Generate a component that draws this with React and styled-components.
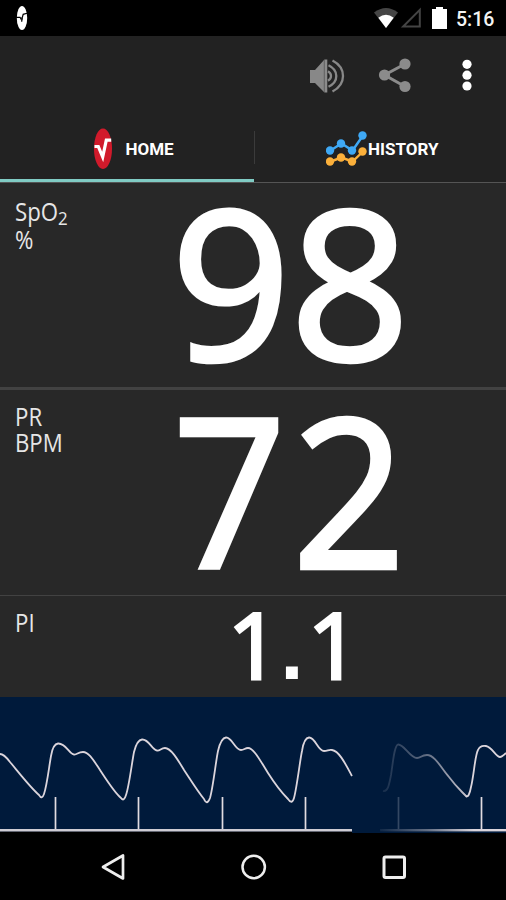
import React from "react";
import styled, { createGlobalStyle } from "styled-components";

const GlobalStyle = createGlobalStyle`
  body {
    margin: 0;
    background: #000;
  }
  * {
    box-sizing: border-box;
  }
  svg {
    display: block;
    flex: none;
  }
`;

const Screen = styled.div`
  width: 506px;
  height: 900px;
  display: flex;
  flex-direction: column;
  overflow: hidden;
  background: #282828;
  color: #fff;
  font-family: Roboto, sans-serif;
`;

const StatusBar = styled.header`
  height: 36px;
  flex: none;
  display: flex;
  align-items: center;
  justify-content: space-between;
  padding: 0 10px 0 16px;
  background: #000;
`;

const StatusIcons = styled.div`
  display: flex;
  align-items: center;
`;

const Clock = styled.span`
  width: 40px;
  margin-left: 9px;
  padding-top: 3px;
  font-size: 19.5px;
  font-weight: 500;
  line-height: 33px;
  white-space: nowrap;
  color: #f4f4f4;
`;

const ActionBar = styled.div`
  height: 80px;
  flex: none;
  display: flex;
  align-items: center;
  justify-content: flex-end;
  padding-right: 33px;
  background: #222;
`;

const Tabs = styled.nav`
  height: 67px;
  flex: none;
  display: flex;
  background: #222;
  border-bottom: 1px solid #555;
`;

const Tab = styled.div`
  width: ${(props) => (props.$active ? "254px" : "251px")};
  height: 66px;
  display: flex;
  align-items: center;
  padding-top: 2px;
  padding-left: ${(props) => (props.$active ? "93px" : "71px")};
  border-bottom: 3px solid ${(props) => (props.$active ? "#80cbc4" : "transparent")};
`;

const TabLabel = styled.span`
  margin-left: ${(props) => props.$gap}px;
  font-size: 17px;
  font-weight: 700;
  line-height: 20px;
`;

const TabDivider = styled.div`
  width: 1px;
  height: 33px;
  margin-top: 15px;
  background: #3b3b3b;
`;

const Panel = styled.section`
  height: ${(props) => props.$height}px;
  flex: none;
  display: grid;
  grid-template-columns: 100px 1fr;
  border-bottom: ${(props) => props.$rule || 0}px solid #424242;
`;

const Label = styled.div`
  padding: ${(props) => props.$top}px 0 0 15px;
  font-family: "Open Sans", "Noto Sans", sans-serif;
  font-size: 25px;
  font-weight: 400;
  line-height: ${(props) => props.$line || 26}px;
  color: #e6e6e6;
  white-space: nowrap;

  span {
    display: block;
    transform: scaleX(0.89);
    transform-origin: 0 0;
  }
  sub {
    font-size: 19px;
    line-height: 0;
    vertical-align: -4px;
  }
`;

const Reading = styled.div`
  padding-left: ${(props) => props.$left}px;
  margin-top: ${(props) => props.$top}px;
  font-family: "Open Sans", "Noto Sans", sans-serif;
  font-size: ${(props) => props.$size}px;
  font-weight: 400;
  line-height: 0.9;
  letter-spacing: ${(props) => props.$spacing || 0}px;
  white-space: nowrap;
  -webkit-text-stroke: ${(props) => props.$stroke || 4.5}px #fff;

  > span {
    display: inline-block;
    transform: scaleX(${(props) => props.$stretch || 1});
    transform-origin: 0 0;
  }
`;

const Point = styled.b`
  display: inline-block;
  width: 27.4px;
  padding-right: 4px;
  font-family: "Liberation Sans", sans-serif;
  font-size: 84px;
  line-height: 0;
  text-align: center;
  -webkit-text-stroke: 0;
`;

const WavePanel = styled.section`
  height: 136px;
  flex: none;
  background: #001a3b;
`;

const NavBar = styled.footer`
  flex: 1;
  display: flex;
  align-items: center;
  justify-content: space-between;
  padding: 0 98px 0 98px;
  background: #000;
`;

const NotificationIcon = () => (
  <svg width="12" height="26" viewBox="0 0 12 26">
    <ellipse cx="6" cy="13" rx="5.2" ry="12" fill="#fff" />
    <path d="M0 12.3H4L5.6 15L7.2 9.3L12 8" fill="none" stroke="#000" strokeWidth="1.2" />
    <path d="M4.6 12.5H7L6.2 17H5.4Z" fill="#222" />
  </svg>
);

const WifiIcon = () => (
  <svg width="26" height="22" viewBox="0 0 26 22">
    <path d="M1 5.5Q13 -3.5 25 5.5L13 21Z" fill="#454545" />
    <path d="M5.3 10.7Q13 5 20.7 10.7L13 21Z" fill="#fff" />
  </svg>
);

const SignalIcon = () => (
  <svg width="22" height="22" viewBox="0 0 22 22" style={{ marginLeft: 1 }}>
    <path d="M3.2 19.5L19.8 2.8V19.5Z" fill="none" stroke="#444" strokeWidth="2" />
  </svg>
);

const BatteryIcon = () => (
  <svg width="15" height="22" viewBox="0 0 15 22" style={{ marginLeft: 10 }}>
    <path d="M4 0H11V2H15V22H0V2H4Z" fill="#fff" />
  </svg>
);

const SpeakerIcon = () => (
  <svg width="36" height="36" viewBox="0 0 36 36">
    <path d="M1 12H6L15 2V34L6 25H1Z" fill="#888" />
    <path d="M16.8 1.5V34.5" stroke="#8b8b8b" strokeWidth="3" />
    <path d="M15.2 2.5V33.5" stroke="#666" strokeWidth="0.8" />
    <g fill="none" stroke="#888" strokeWidth="2.3">
      <path d="M19 13.2Q22 15 22 18T19 22.8" />
      <path d="M19.5 7.3Q27.3 11 27.3 18T19.5 28.7" />
      <path d="M23.5 2.5Q34 8 34 18T23.5 33.5" />
    </g>
  </svg>
);

const ShareIcon = () => (
  <svg width="34" height="36" viewBox="0 0 34 36" style={{ marginLeft: 33 }}>
    <path d="M27 6L6.5 17L27 28.5" fill="none" stroke="#8b8b8b" strokeWidth="3" />
    <circle cx="27" cy="6" r="5.6" fill="#8b8b8b" />
    <circle cx="6.5" cy="17" r="5.6" fill="#8b8b8b" />
    <circle cx="27" cy="28.5" r="5.6" fill="#8b8b8b" />
  </svg>
);

const MoreIcon = () => (
  <svg width="12" height="34" viewBox="0 0 12 34" style={{ marginLeft: 49 }}>
    <circle cx="6" cy="5.3" r="4.6" fill="#fff" />
    <circle cx="6" cy="16.2" r="4.6" fill="#fff" />
    <circle cx="6" cy="27" r="4.6" fill="#fff" />
  </svg>
);

const HomeIcon = () => (
  <svg width="20" height="42" viewBox="0 0 20 42">
    <ellipse cx="10" cy="20.7" rx="9" ry="20.3" fill="#d11a2b" />
    <path d="M1.5 18.5H5.3L9.7 29L13.3 12.2H18.2" fill="none" stroke="#fff" strokeWidth="3.2" />
  </svg>
);

const lines = [
  { color: "#3fa9f5", points: [[4.5, 22], [15.5, 15], [26.5, 22], [37, 7]] },
  { color: "#fbb03b", points: [[4.5, 33], [15.5, 29], [26.5, 33], [37, 23]] },
];

const HistoryIcon = () => (
  <svg width="42" height="40" viewBox="0 0.5 42 40">
    {lines.map((line) => (
      <g key={line.color} fill={line.color}>
        <polyline points={line.points.join(" ")} fill="none" stroke={line.color} strokeWidth="2.4" />
        {line.points.map(([x, y]) => (
          <circle key={x} cx={x - 0.5} cy={y} r="4.2" />
        ))}
      </g>
    ))}
  </svg>
);

const Waveform = () => (
  <svg width="506" height="136" viewBox="0 0 506 136">
    <defs>
      <linearGradient id="fade" gradientUnits="userSpaceOnUse" x1="380" y1="0" x2="474" y2="0">
        <stop offset="0" stopColor="#dbd5dc" stopOpacity="0.08" />
        <stop offset="0.5" stopColor="#dbd5dc" stopOpacity="0.45" />
        <stop offset="1" stopColor="#dbd5dc" />
      </linearGradient>
    </defs>
    <g fill="none" stroke="#dbd5dc" strokeWidth="1.8" strokeLinejoin="round">
      <path d="M0 57C4 57 7 61 10 65C20 77 30 90 39 98Q42 103 44 97C47 88 49 70 51 59Q53 47 58 46.5C66 46 69 57 74 57.5C77 58 78 55 83 55C89 55 94 64 100 73C106 82 114 95 121 101Q124 105 126 98C129 90 132 65 134 55Q137 43 142 42.5C149 42 152 53 157 53.5C160 54 161 51 165 51C171 51 178 63 184 73C190 82 198 95 204 102Q207 109 210 101C213 91 216 63 218 54Q221 41 226 40.5C232 40 235 53 241 53C244 53 245 51 248 51C254 51 261 65 268 76C275 87 282 96 288 102Q292 108 294 101C297 90 300 63 302 54Q304 41 309 40.5C315 40 318 54 324 54C328 54 328 52.5 332 53C339 54 345 66 352 79" />
      <path d="M383 94C388 95 389 88 391 78C393 66 394 49 398 47.5C404 47 410 61 417 61C421 61 421 58 427 58C435 58 441 71 449 80C455 88 458 91 462 95L467 100" stroke="url(#fade)" />
      <path d="M466 99Q469 101 471 90C474 78 475 58 478 53Q480 48 486 49C492 50 496 60 500 60Q502 60 506 56" />
    </g>
    <path d="M55.5 100V132M138.5 100V132M222.5 100V132M305.5 100V132M481.5 100V132" stroke="#e1dce1" strokeWidth="1.7" />
    <path d="M398.5 100V132" stroke="#344863" strokeWidth="1.7" />
    <rect x="0" y="132" width="352" height="2.7" fill="#ceccd4" />
    <rect x="380" y="132" width="126" height="2.4" fill="url(#fade)" />
    <rect x="0" y="134.7" width="352" height="1.3" fill="#000" />
  </svg>
);

const BackIcon = () => (
  <svg width="30" height="30" viewBox="0 0 30 30">
    <path d="M5 15L25 3.5V26.5Z" fill="none" stroke="#eee" strokeWidth="2.7" strokeLinejoin="round" />
  </svg>
);

const CircleIcon = () => (
  <svg width="28" height="28" viewBox="0 0 28 28">
    <circle cx="13.7" cy="14" r="11.2" fill="none" stroke="#eee" strokeWidth="2.5" />
  </svg>
);

const SquareIcon = () => (
  <svg width="28" height="28" viewBox="0 0 28 28">
    <rect x="4" y="4" width="20.5" height="20.5" rx="1.5" fill="none" stroke="#eee" strokeWidth="3" />
  </svg>
);

function App() {
  return (
    <Screen>
      <GlobalStyle />
      <StatusBar>
        <NotificationIcon />
        <StatusIcons>
          <WifiIcon />
          <SignalIcon />
          <BatteryIcon />
          <Clock>5:16</Clock>
        </StatusIcons>
      </StatusBar>
      <ActionBar>
        <SpeakerIcon />
        <ShareIcon />
        <MoreIcon />
      </ActionBar>
      <Tabs>
        <Tab $active>
          <HomeIcon />
          <TabLabel $gap={12.5}>HOME</TabLabel>
        </Tab>
        <TabDivider />
        <Tab>
          <HistoryIcon />
          <TabLabel $gap={0}>HISTORY</TabLabel>
        </Tab>
      </Tabs>
      <Panel $height={207} $rule={3}>
        <Label $top={14} $line={28}>
          <span>SpO<sub>2</sub></span>
          <span>%</span>
        </Label>
        <Reading $left={71.5} $top={3} $size={208}>
          <span>98</span>
        </Reading>
      </Panel>
      <Panel $height={206} $rule={1}>
        <Label $top={13} $line={26}>
          <span>PR</span>
          <span>BPM</span>
        </Label>
        <Reading $left={72.5} $top={4} $size={208} $stretch={0.95} $spacing={6.8}>
          <span>72</span>
        </Reading>
      </Panel>
      <Panel $height={101}>
        <Label $top={13} $line={26}>
          <span>PI</span>
        </Label>
        <Reading $left={127.5} $top={7} $size={92} $stroke={3}>
          1<Point>.</Point>1
        </Reading>
      </Panel>
      <WavePanel>
        <Waveform />
      </WavePanel>
      <NavBar>
        <BackIcon />
        <CircleIcon />
        <SquareIcon />
      </NavBar>
    </Screen>
  );
}

export default App;
